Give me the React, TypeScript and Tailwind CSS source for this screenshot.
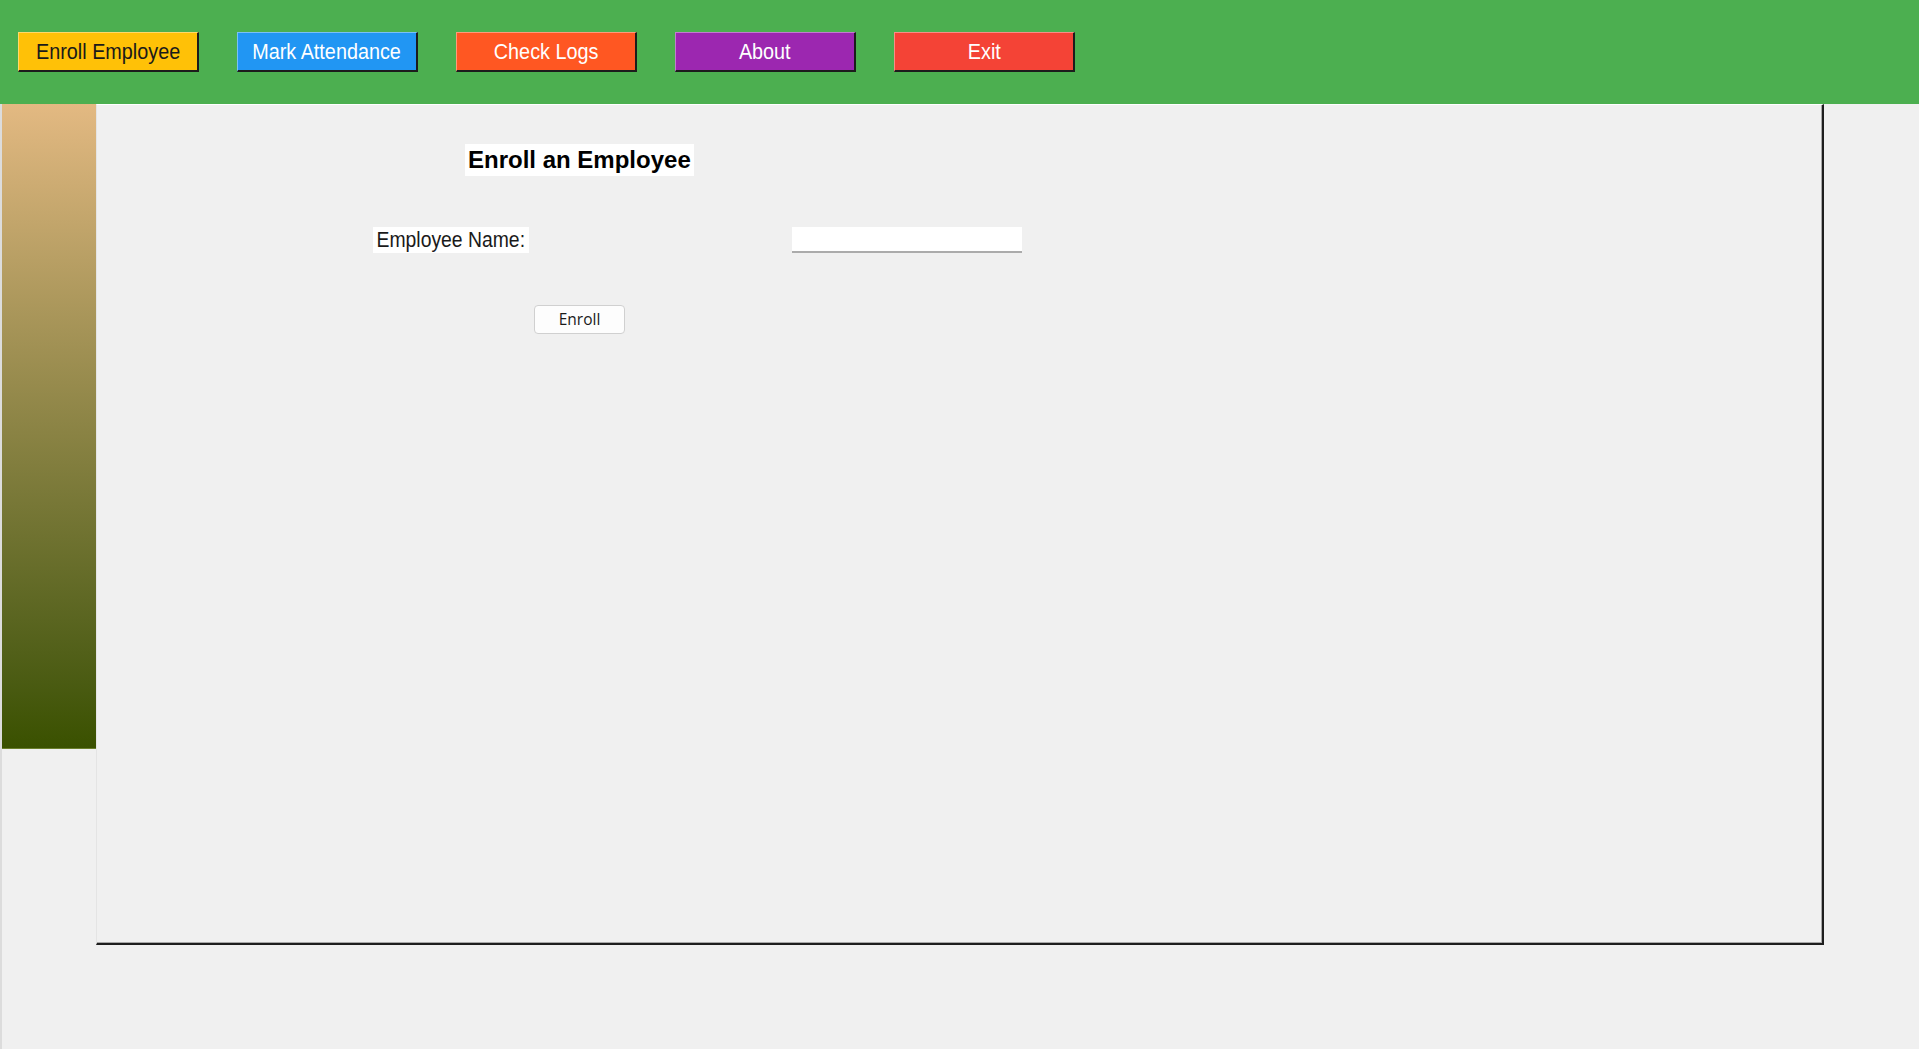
import { FC } from "react";

interface NavButtonProps {
  label: string;
  bg: string;
  text: string;
}

const NavButton: FC<NavButtonProps> = ({ label, bg, text }) => {
  return (
    <button
      className={`w-[181px] h-[40px] flex items-center justify-center border-t border-l border-t-white/40 border-l-white/40 border-b-2 border-r-2 border-b-[#1c1c1c] border-r-[#1c1c1c] ${bg} ${text}`}
    >
      <span className="inline-block whitespace-nowrap scale-x-[0.9] text-[22px] leading-none pt-[1px]">{label}</span>
    </button>
  );
};

const navItems: NavButtonProps[] = [
  { label: "Enroll Employee", bg: "bg-[#ffc107]", text: "text-[#1a1a1a]" },
  { label: "Mark Attendance", bg: "bg-[#2196f3]", text: "text-white" },
  { label: "Check Logs", bg: "bg-[#ff5722]", text: "text-white" },
  { label: "About", bg: "bg-[#9c27b0]", text: "text-white" },
  { label: "Exit", bg: "bg-[#f44336]", text: "text-white" },
];

export default function App() {
  return (
    <div
      className="w-[1919px] h-[1049px] bg-[#f0f0f0] overflow-hidden flex flex-col"
      style={{ fontFamily: '"Liberation Sans", Arial, sans-serif' }}
    >
      {/* top bar */}
      <div className="h-[104px] shrink-0 bg-[#4caf50] flex items-center gap-[38px] pl-[18px] pb-[1px]">
        {navItems.map((item) => (
          <NavButton key={item.label} {...item} />
        ))}
      </div>

      <div className="flex flex-1 items-start border-l-2 border-[#dcdcdc]">
        {/* side strip */}
        <div className="w-[94px] h-[645px] shrink-0 bg-gradient-to-b from-[#e3b982] to-[#3a5100] border-b border-[#6b7f2c]" />

        {/* main frame */}
        <div className="w-[1728px] h-[841px] shrink-0 border-t border-l border-t-white border-l-[#e4e4e4] border-b-2 border-r-2 border-b-[#1e1e1e] border-r-[#1e1e1e] shadow-[inset_-1px_-1px_0_#a8a8a8] flex flex-col items-start">
          <h1 className="ml-[368px] mt-[39px] h-[32px] px-[3px] bg-white flex items-center text-[24px] font-bold text-black">
            Enroll an Employee
          </h1>

          <div className="mt-[51px] ml-[276px] flex items-start">
            <label className="h-[26px] w-[156px] bg-white flex items-center overflow-visible whitespace-nowrap text-[22px] text-[#1a1a1a]">
              <span className="inline-block origin-left scale-x-[0.88] pl-[4px] leading-none whitespace-nowrap">
                Employee Name:
              </span>
            </label>
            <input
              type="text"
              className="ml-[263px] w-[230px] h-[26px] bg-white border-b-2 border-[#ababab] outline-none"
            />
          </div>

          <button
            className="ml-[437px] mt-[52px] w-[91px] h-[29px] rounded-[4px] bg-[#fdfdfd] border border-[#d0d0d0] text-[15.5px] text-[#1a1a1a]"
            style={{ fontFamily: '"Open Sans", "Noto Sans", sans-serif' }}
          >
            Enroll
          </button>
        </div>
      </div>
    </div>
  );
}
